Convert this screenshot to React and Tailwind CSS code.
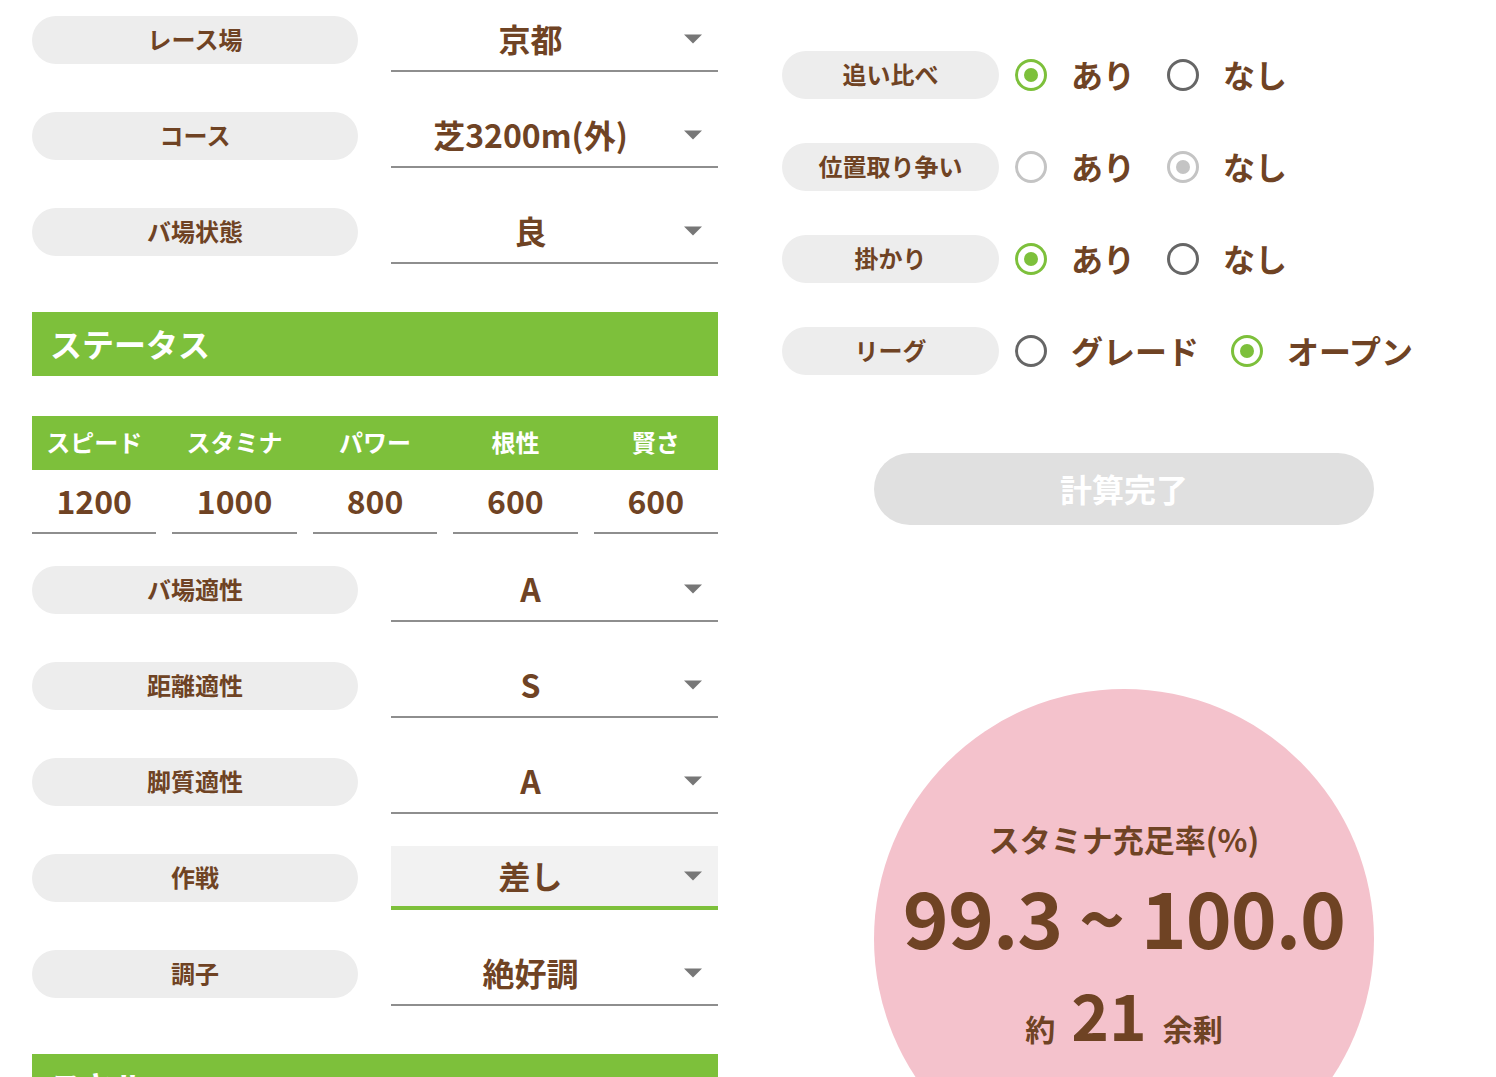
import React from 'react';

const brown = 'text-[#6f4324]';

const Pill = ({ children, w = 'w-[326px]' }) => (
  <div className={`${w} h-12 shrink-0 rounded-full bg-[#ededed] flex items-center justify-center pb-[2px] text-[24px] font-bold ${brown}`}>
    {children}
  </div>
);

const Select = ({ value, focused }) => (
  <div
    className={`relative w-[327px] h-16 flex items-center pr-12 ${
      focused ? 'bg-[#f2f2f2] border-b-4 border-[#7dc03b]' : 'border-b-2 border-[#8e8e8e]'
    }`}
  >
    <span className={`flex-1 text-center text-[32px] font-bold pb-[3px] ${brown}`}>{value}</span>
    <span className="absolute right-4 top-1/2 -translate-y-1/2 w-0 h-0 border-l-[9px] border-r-[9px] border-t-[9px] border-l-transparent border-r-transparent border-t-[#777]" />
  </div>
);

const Row = ({ label, value, focused }) => (
  <div className="flex items-center justify-between">
    <Pill>{label}</Pill>
    <Select value={value} focused={focused} />
  </div>
);

const Radio = ({ state }) => {
  // state: on | off | dis | dison
  const ring =
    state === 'on'
      ? 'border-[#7dc03b]'
      : state === 'off'
      ? 'border-[#666]'
      : 'border-[#c4c4c4]';
  return (
    <span className={`w-8 h-8 rounded-full border-[3px] ${ring} flex items-center justify-center shrink-0`}>
      {state === 'on' && <span className="w-[14px] h-[14px] rounded-full bg-[#7dc03b]" />}
      {state === 'dison' && <span className="w-[14px] h-[14px] rounded-full bg-[#c4c4c4]" />}
    </span>
  );
};

const Option = ({ state, label }) => (
  <div className="flex items-center gap-6">
    <Radio state={state} />
    <span className={`text-[32px] font-bold ${brown} leading-none pb-[2px]`}>{label}</span>
  </div>
);

const RadioRow = ({ label, opts }) => (
  <div className="flex items-center gap-4">
    <Pill w="w-[217px]">{label}</Pill>
    <div className="flex items-center gap-8">
      {opts.map((o) => (
        <Option key={o.label} {...o} />
      ))}
    </div>
  </div>
);

const SectionHead = ({ children }) => (
  <div className="h-16 bg-[#7dc03b] flex items-center px-[18px] pb-[3px] text-white text-[32px] font-bold">
    {children}
  </div>
);

const stats = [
  ['スピード', 1200],
  ['スタミナ', 1000],
  ['パワー', 800],
  ['根性', 600],
  ['賢さ', 600],
];

export default function App() {
  return (
    <div
      className="w-[1496px] h-[1077px] overflow-hidden bg-white flex"
      style={{ fontFamily: '"Noto Sans CJK JP", "Noto Sans", sans-serif' }}
    >
      {/* left column */}
      <div className="w-[752px] shrink-0 pl-8 pr-[34px] pt-2 flex flex-col">
        <div className="flex flex-col gap-8">
          <Row label="レース場" value="京都" />
          <Row label="コース" value="芝3200m(外)" />
          <Row label="バ場状態" value="良" />
        </div>

        <div className="mt-12">
          <SectionHead>ステータス</SectionHead>
        </div>

        <div className="mt-10 grid grid-cols-5 gap-x-4">
          <div className="col-span-5 h-[54px] bg-[#7dc03b] grid grid-cols-5 gap-x-4">
            {stats.map(([k]) => (
              <div key={k} className="flex items-center justify-center pb-[3px] text-white text-[24px] font-bold">
                {k}
              </div>
            ))}
          </div>
          {stats.map(([k, v]) => (
            <div
              key={k}
              className={`h-16 border-b-2 border-[#8e8e8e] flex items-center justify-center pb-[3px] text-[32px] font-bold ${brown}`}
            >
              {v}
            </div>
          ))}
        </div>

        <div className="mt-6 flex flex-col gap-8">
          <Row label="バ場適性" value="A" />
          <Row label="距離適性" value="S" />
          <Row label="脚質適性" value="A" />
          <Row label="作戦" value="差し" focused />
          <Row label="調子" value="絶好調" />
        </div>

        <div className="mt-12">
          <SectionHead>スキル</SectionHead>
        </div>
      </div>

      {/* right column */}
      <div className="flex-1 flex flex-col pt-[51px]">
        <div className="pl-[30px] flex flex-col gap-11">
          <RadioRow
            label="追い比べ"
            opts={[
              { state: 'on', label: 'あり' },
              { state: 'off', label: 'なし' },
            ]}
          />
          <RadioRow
            label="位置取り争い"
            opts={[
              { state: 'dis', label: 'あり' },
              { state: 'dison', label: 'なし' },
            ]}
          />
          <RadioRow
            label="掛かり"
            opts={[
              { state: 'on', label: 'あり' },
              { state: 'off', label: 'なし' },
            ]}
          />
          <RadioRow
            label="リーグ"
            opts={[
              { state: 'off', label: 'グレード' },
              { state: 'on', label: 'オープン' },
            ]}
          />
        </div>

        <div className="mt-[78px] flex justify-center">
          <button className="w-[500px] h-[72px] rounded-full bg-[#e0e0e0] text-white text-[32px] font-bold pb-[3px]">
            計算完了
          </button>
        </div>

        <div className="mt-[164px] flex justify-center">
          <div className={`w-[500px] h-[500px] shrink-0 rounded-full bg-[#f4c2cc] flex flex-col items-center pt-[128px] ${brown}`}>
            <div className="text-[31px] font-bold leading-[44px]">スタミナ充足率(%)</div>
            <div className="mt-[14px] text-[78px] font-bold leading-[80px] tracking-[-1px]">99.3 ~ 100.0</div>
            <div className="mt-[22px] flex items-baseline gap-4 font-bold">
              <span className="text-[30px] leading-[40px]">約</span>
              <span className="text-[64px] leading-[72px]">21</span>
              <span className="text-[30px] leading-[40px]">余剰</span>
            </div>
          </div>
        </div>
      </div>
    </div>
  );
}
